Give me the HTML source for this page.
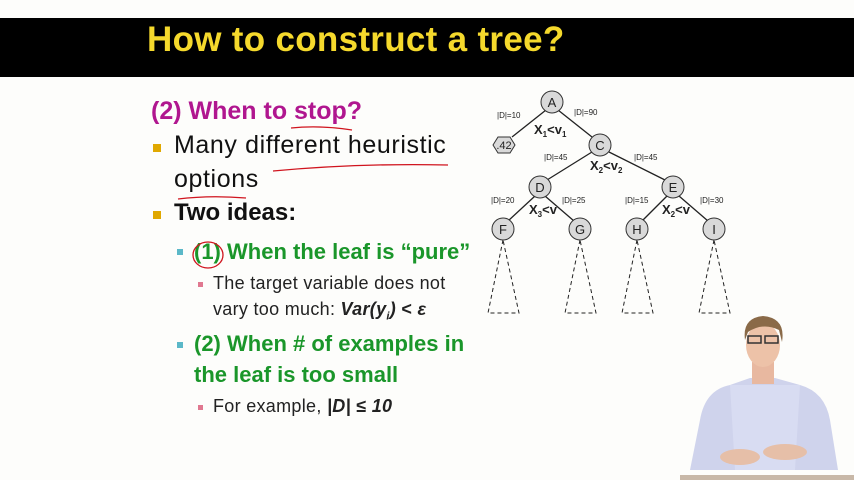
<!DOCTYPE html>
<html><head><meta charset="utf-8"><style>
*{margin:0;padding:0}
body{width:854px;height:480px;position:relative;background:#fdfdfb;overflow:hidden;font-family:"Liberation Sans",Arial,sans-serif}
.t{position:absolute;white-space:nowrap}
.bar{position:absolute;left:0;top:18px;width:854px;height:59px;background:#000}
.sq{position:absolute;width:8px;height:8px}
</style></head><body>
<div class="bar"></div>
<div class="t" style="left:147px;top:20px;font-size:35px;font-weight:bold;color:#f5d92c;letter-spacing:0.3px">How to construct a tree?</div>

<div class="t" style="left:151px;top:97px;font-size:25px;font-weight:bold;color:#b0168f">(2) When to stop?</div>
<div class="sq" style="left:153px;top:144px;background:#e0a800"></div>
<div class="t" style="left:174px;top:131px;font-size:25px;color:#111;letter-spacing:0.6px">Many different heuristic</div>
<div class="t" style="left:174px;top:165px;font-size:25px;color:#111;letter-spacing:0.6px">options</div>
<div class="sq" style="left:153px;top:211px;background:#e0a800"></div>
<div class="t" style="left:174px;top:199px;font-size:24px;font-weight:bold;color:#111">Two ideas:</div>

<div class="sq" style="left:177px;top:249px;width:6px;height:6px;background:#5bb8c8"></div>
<div class="t" style="left:194px;top:239px;font-size:22px;font-weight:bold;color:#1a962a">(1) When the leaf is “pure”</div>
<div class="sq" style="left:198px;top:282px;width:5px;height:5px;background:#e07890"></div>
<div class="t" style="left:213px;top:273px;font-size:18px;color:#222;letter-spacing:0.3px">The target variable does not</div>
<div class="t" style="left:213px;top:299px;font-size:18px;color:#222;letter-spacing:0.3px">vary too much: <b><i>Var(y<sub style="font-size:11px">i</sub>)</i> &lt; <i>ε</i></b></div>

<div class="sq" style="left:177px;top:342px;width:6px;height:6px;background:#5bb8c8"></div>
<div class="t" style="left:194px;top:331px;font-size:22px;font-weight:bold;color:#1a962a">(2) When # of examples in</div>
<div class="t" style="left:194px;top:362px;font-size:22px;font-weight:bold;color:#1a962a">the leaf is too small</div>
<div class="sq" style="left:198px;top:405px;width:5px;height:5px;background:#e07890"></div>
<div class="t" style="left:213px;top:396px;font-size:18px;color:#222;letter-spacing:0.3px">For example, <b><i>|D|</i> ≤ <i>10</i></b></div>

<svg style="position:absolute;left:0;top:0" width="854" height="480">
<g stroke="#d0141e" stroke-width="1.3" fill="none">
<path d="M291 128 Q320 125 352 130"/>
<path d="M273 171 Q360 163 448 165"/>
<path d="M178 199 Q210 195 246 198"/>
<ellipse cx="208" cy="255" rx="15" ry="13"/>
</g>
<g font-family="Liberation Sans,sans-serif" fill="#222">
<g stroke="#222" stroke-width="1.3" fill="none">
<line x1="546" y1="110" x2="512" y2="137"/><line x1="558" y1="110" x2="592" y2="137"/>
<line x1="592" y1="152" x2="547" y2="180"/><line x1="609" y1="152" x2="665" y2="180"/>
<line x1="535" y1="196" x2="508" y2="221"/><line x1="545" y1="196" x2="574" y2="221"/>
<line x1="667" y1="196" x2="642" y2="221"/><line x1="679" y1="196" x2="708" y2="221"/>
<g stroke-dasharray="4,3" stroke-width="1">
<path d="M503 240 L488 313 L519 313 Z"/><path d="M580 240 L565 313 L596 313 Z"/>
<path d="M637 240 L622 313 L653 313 Z"/><path d="M714 240 L699 313 L730 313 Z"/>
</g>
</g>
<g fill="#d9d9d9" stroke="#333" stroke-width="1">
<circle cx="552" cy="102" r="11"/><circle cx="600" cy="145" r="11"/>
<circle cx="540" cy="187" r="11"/><circle cx="673" cy="187" r="11"/>
<circle cx="503" cy="229" r="11"/><circle cx="580" cy="229" r="11"/>
<circle cx="637" cy="229" r="11"/><circle cx="714" cy="229" r="11"/>
<path d="M493 145 L498 137 L510 137 L515 145 L510 153 L498 153 Z"/>
</g>
<g font-size="13" text-anchor="middle">
<text x="552" y="107">A</text><text x="600" y="150">C</text><text x="540" y="192">D</text><text x="673" y="192">E</text>
<text x="503" y="234">F</text><text x="580" y="234">G</text><text x="637" y="234">H</text><text x="714" y="234">I</text>
<text x="504" y="149" font-size="11">.42</text>
</g>
<g font-size="8">
<text x="497" y="118">|D|=10</text><text x="574" y="115">|D|=90</text>
<text x="544" y="160">|D|=45</text><text x="634" y="160">|D|=45</text>
<text x="491" y="203">|D|=20</text><text x="562" y="203">|D|=25</text>
<text x="625" y="203">|D|=15</text><text x="700" y="203">|D|=30</text>
</g>
<g font-size="13" font-weight="bold">
<text x="534" y="134">X<tspan font-size="8" dy="3">1</tspan><tspan dy="-3">&lt;v</tspan><tspan font-size="8" dy="3">1</tspan></text>
<text x="590" y="170">X<tspan font-size="8" dy="3">2</tspan><tspan dy="-3">&lt;v</tspan><tspan font-size="8" dy="3">2</tspan></text>
<text x="529" y="214">X<tspan font-size="8" dy="3">3</tspan><tspan dy="-3">&lt;v</tspan></text>
<text x="662" y="214">X<tspan font-size="8" dy="3">2</tspan><tspan dy="-3">&lt;v</tspan></text>
</g>
</g>
<rect x="680" y="475" width="174" height="5" fill="#c8b8a8"/>
<path d="M690 470 L700 420 Q705 390 730 385 L750 378 L775 378 L800 385 Q825 392 830 420 L838 470 Z" fill="#cfd3ec"/>
<path d="M730 385 L800 385 L795 470 L735 470 Z" fill="#d8dcf2"/>
<rect x="752" y="362" width="22" height="22" fill="#e8b8a0"/>
<ellipse cx="763" cy="345" rx="17" ry="22" fill="#edc2a8"/>
<path d="M745 340 Q742 318 763 316 Q786 318 782 342 L779 330 Q763 322 748 332 Z" fill="#8a6a48"/>
<rect x="748" y="336" width="13" height="7" fill="none" stroke="#333" stroke-width="1.5"/>
<rect x="765" y="336" width="13" height="7" fill="none" stroke="#333" stroke-width="1.5"/>
<ellipse cx="740" cy="457" rx="20" ry="8" fill="#e6bfa8"/>
<ellipse cx="785" cy="452" rx="22" ry="8" fill="#e6bfa8"/>
</svg>
</body></html>
